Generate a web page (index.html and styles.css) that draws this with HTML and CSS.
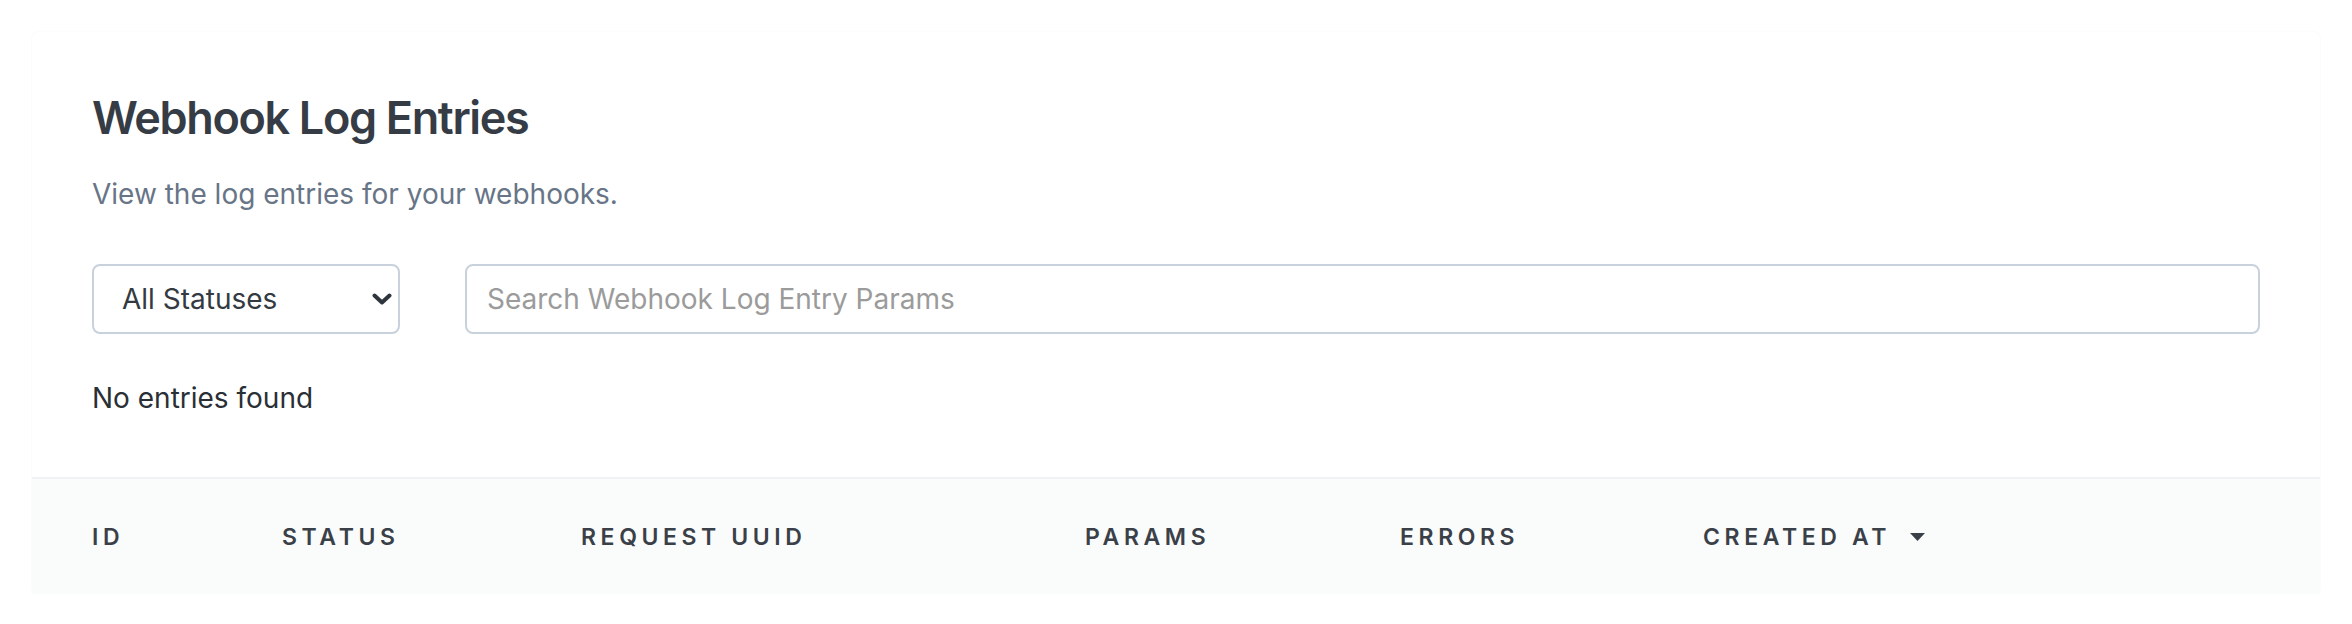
FILE: index.html
```html
<!DOCTYPE html>
<html lang="en">
<head>
<meta charset="utf-8">
<title>Webhook Log Entries</title>
<link rel="stylesheet" href="styles.css">
</head>
<body>
<div class="card">
  <div class="card-body">
    <h1 class="title">Webhook Log Entries</h1>
    <p class="subtitle">View the log entries for your webhooks.</p>
    <div class="filters">
      <div class="select-wrap">
        <select class="select">
          <option>All Statuses</option>
        </select>
        <svg class="chevron" width="20" height="12" viewBox="0 0 20 12"><path d="M2.5 2.5 L10 9.5 L17.5 2.5" fill="none" stroke="#2f353d" stroke-width="4" stroke-linecap="round" stroke-linejoin="round"/></svg>
      </div>
      <input class="search" type="text" placeholder="Search Webhook Log Entry Params">
    </div>
    <div class="empty">No entries found</div>
  </div>
  <div class="thead">
    <div class="th">ID</div>
    <div class="th">STATUS</div>
    <div class="th">REQUEST UUID</div>
    <div class="th">PARAMS</div>
    <div class="th">ERRORS</div>
    <div class="th sorted">CREATED AT <svg class="caret" width="15" height="8" viewBox="0 0 15 8"><path d="M0 0 H15 L7.5 8 Z" fill="#3a4048"/></svg></div>
  </div>
</div>
</body>
</html>
```
FILE: styles.css
```css
html, body {
  margin: 0;
  padding: 0;
  background: #ffffff;
}
body {
  font-family: Inter, "Noto Sans", sans-serif;
  color: #1f2937;
}
.card {
  margin: 32px 32px 0;
  background: #fff;
  border-radius: 6px;
  box-shadow: 0 0 2px rgba(0, 0, 0, 0.05);
}
.card-body {
  padding: 59px 60px 59px;
}
.title {
  margin: 0;
  font-size: 45px;
  line-height: 54px;
  font-weight: 600;
  letter-spacing: -0.03em;
  color: #363c45;
}
.subtitle {
  margin: 29px 0 0;
  font-size: 28px;
  line-height: 40px;
  color: #687587;
}
.filters {
  margin-top: 50px;
  display: flex;
  gap: 65px;
  height: 70px;
}
.select-wrap {
  position: relative;
  width: 308px;
  flex: none;
}
.select {
  appearance: none;
  -webkit-appearance: none;
  width: 100%;
  height: 70px;
  box-sizing: border-box;
  border: 2px solid #c9d1dc;
  border-radius: 8px;
  background: #fff;
  padding: 0 0 0 28px;
  font-family: Inter, "Noto Sans", sans-serif;
  font-size: 28px;
  color: #343a42;
  outline: none;
}
.chevron {
  position: absolute;
  left: 280px;
  top: 29px;
  pointer-events: none;
}
.search {
  flex: 1;
  min-width: 0;
  height: 70px;
  box-sizing: border-box;
  border: 2px solid #c9d1dc;
  border-radius: 8px;
  padding: 0 0 0 20px;
  font-family: Inter, "Noto Sans", sans-serif;
  font-size: 28px;
  color: #343a42;
  outline: none;
}
.search::placeholder {
  color: #9b9b9b;
}
.empty {
  margin-top: 44px;
  font-size: 28px;
  line-height: 40px;
  color: #2a2f36;
}
.thead {
  display: grid;
  grid-template-columns: 190px 299px 504px 315px 303px 1fr;
  align-items: center;
  height: 115px;
  padding-left: 60px;
  border-top: 2px solid #f0f2f4;
  background: #fafbfb;
}
.th {
  font-size: 23px;
  font-weight: 600;
  letter-spacing: 0.2em;
  color: #3a4048;
  white-space: nowrap;
  display: flex;
  align-items: center;
}
.caret {
  margin-left: 19px;
}
```
